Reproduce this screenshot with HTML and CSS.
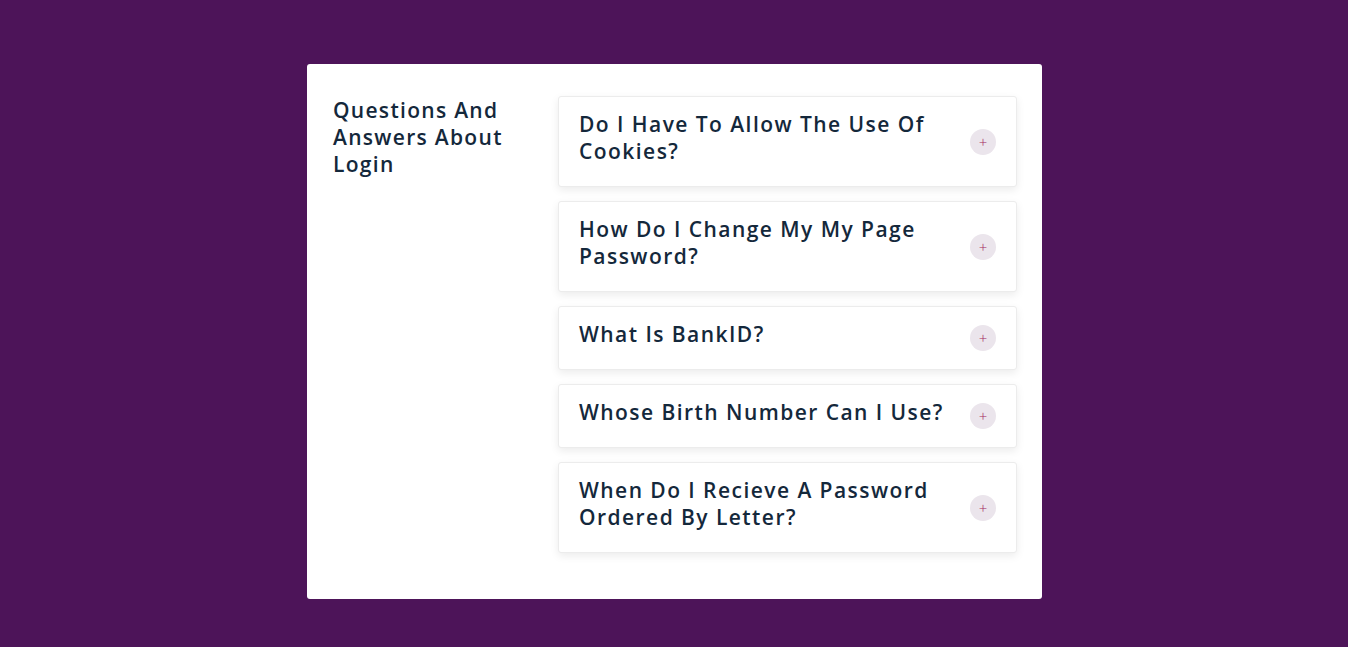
FILE: index.html
```html
<!DOCTYPE html>
<html lang="en">
<head>
<meta charset="utf-8">
<title>FAQ</title>
<link rel="stylesheet" href="styles.css">
</head>
<body>
<main class="page">
  <section class="card">
    <h2 class="title">Questions And Answers About Login</h2>
    <div class="list">
      <div class="item">
        <h3 class="q">Do I Have To Allow The Use Of Cookies?</h3>
        <span class="toggle">+</span>
      </div>
      <div class="item">
        <h3 class="q">How Do I Change My My Page Password?</h3>
        <span class="toggle">+</span>
      </div>
      <div class="item">
        <h3 class="q">What Is BankID?</h3>
        <span class="toggle">+</span>
      </div>
      <div class="item">
        <h3 class="q">Whose Birth Number Can I Use?</h3>
        <span class="toggle">+</span>
      </div>
      <div class="item">
        <h3 class="q">When Do I Recieve A Password Ordered By Letter?</h3>
        <span class="toggle">+</span>
      </div>
    </div>
  </section>
</main>
</body>
</html>
```
FILE: styles.css
```css
html, body {
  margin: 0;
  padding: 0;
}
body {
  background: #4d1459;
  font-family: "Open Sans", "Noto Sans", sans-serif;
  color: #14283b;
}
.page {
  height: 647px;
  display: flex;
  justify-content: center;
  align-items: flex-start;
  padding-top: 64px;
  padding-left: 1px;
  box-sizing: border-box;
}
.card {
  width: 735px;
  height: 535px;
  box-sizing: border-box;
  background: #fff;
  border-radius: 3px;
  padding: 32px 25px 46px 26px;
  display: flex;
  gap: 25px;
}
.title {
  width: 200px;
  flex: none;
  margin: 0;
  padding-top: 1px;
  font-size: 21px;
  font-weight: 600;
  line-height: 27px;
  letter-spacing: 1.3px;
}
.list {
  flex: 1;
  display: flex;
  flex-direction: column;
  gap: 14px;
}
.item {
  display: flex;
  align-items: center;
  justify-content: space-between;
  background: #fff;
  border: 1px solid #ececec;
  border-radius: 3px;
  box-shadow: 0 3px 8px rgba(0, 0, 0, 0.08);
  padding: 14px 20px 21px 20px;
}
.q {
  margin: 0;
  font-size: 21px;
  font-weight: 600;
  line-height: 27px;
  letter-spacing: 1.45px;
  max-width: 370px;
}
.toggle {
  flex: none;
  width: 26px;
  height: 26px;
  border-radius: 50%;
  background: #ebe5ec;
  color: #a3285c;
  font-size: 15px;
  font-weight: 300;
  line-height: 26px;
  text-align: center;
  margin-bottom: -7px;
}
```
